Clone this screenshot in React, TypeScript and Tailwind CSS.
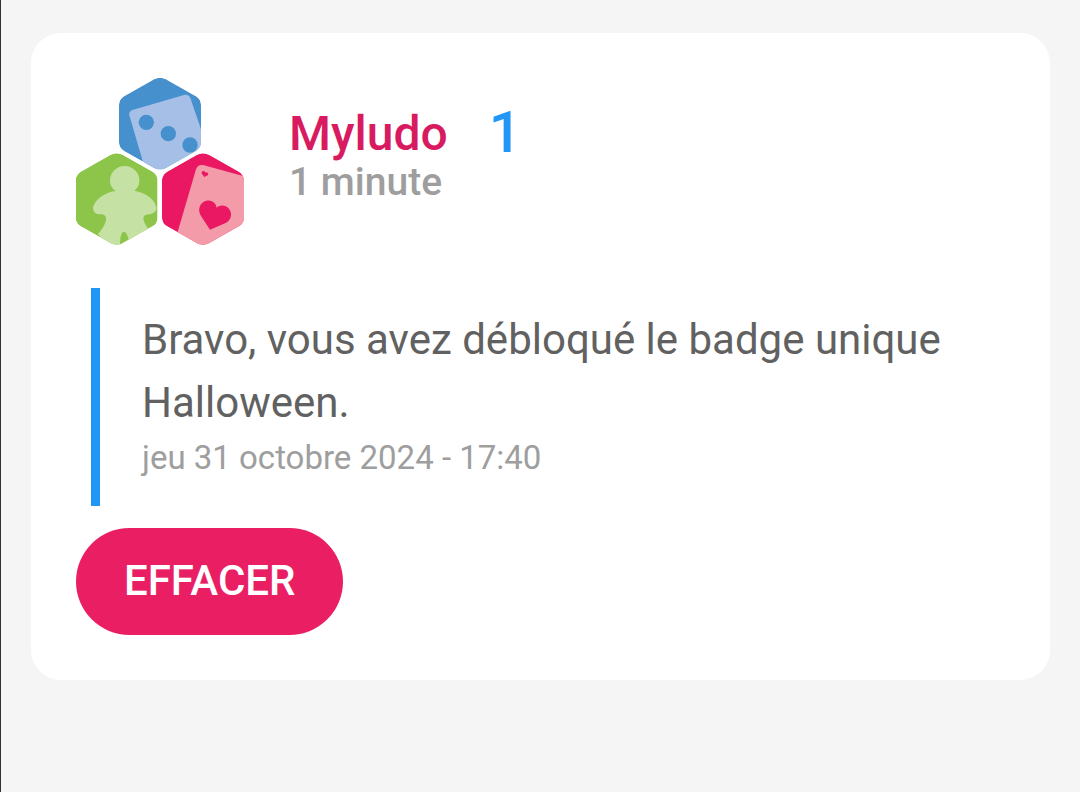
import React from 'react';

const HEXAGON =
  'M104 5Q122 -4 140 5L230 56Q245 65 245 82V194Q245 211 230 220L140 271Q122 280 104 271L14 220Q-1 211 -1 194V82Q-1 65 14 56Z';

const MyludoLogo: React.FC = () => (
  <svg viewBox="18 24 504 504" className="w-[168px] h-[168px] shrink-0" role="img" aria-label="Logo Myludo">
    <defs>
      <clipPath id="hexagon">
        <path d={HEXAGON} />
      </clipPath>
    </defs>

    {/* dice */}
    <g transform="translate(148 23)" clipPath="url(#hexagon)">
      <path d={HEXAGON} fill="#4690cd" />
      <path d="M30 113Q27 102 39 97L194 52Q207 49 213 61L262 205L190 290L76 270Z" fill="#a5bfe6" />
      <circle cx="81" cy="134" r="23" fill="#4690cd" />
      <circle cx="147" cy="168" r="23" fill="#4690cd" />
      <circle cx="212" cy="202" r="23" fill="#4690cd" />
    </g>

    {/* meeple */}
    <g transform="translate(18 249)" clipPath="url(#hexagon)">
      <path d={HEXAGON} fill="#8cc54a" />
      <path
        d="M119 114C108 106 102 95 102 83A44 44 0 0 1 190 83C190 95 185 105 175 113C209 119 236 138 241 163C242 175 232 182 218 184C204 186 200 191 203 202C206 214 213 222 220 233L160 280C160 260 153 236 144 236C135 236 132 254 132 280H98L66 243C77 232 88 214 90 201C92 190 86 183 72 184C57 184 49 174 52 160C60 138 85 119 119 114Z"
        fill="#c6e1a4"
      />
    </g>

    {/* playing card */}
    <g transform="translate(277 249)" clipPath="url(#hexagon)">
      <path d={HEXAGON} fill="#ea1762" />
      <path d="M45 240L101 49Q106 34 122 36L250 71V290H60Z" fill="#f39ba8" />
      <path d="M143 230L116 189C104 169 113 148 132 143C148 140 161 149 163 164C174 154 190 156 200 167C212 183 206 203 188 211Z" fill="#ea1762" />
      <path d="M126 72L119 63C115 56 122 51 128 56L131 59C136 56 140 62 136 67Z" fill="#ea1762" />
    </g>
  </svg>
);

interface NotificationCardProps {
  author: string;
  count: number;
  age: string;
  message: string;
  date: string;
}

const NotificationCard: React.FC<NotificationCardProps> = ({ author, count, age, message, date }) => (
  <article className="bg-white rounded-[30px] p-[45px]">
    <header className="flex items-center gap-[45px]">
      <MyludoLogo />
      <div className="pb-2 font-medium">
        <div className="flex items-start gap-[41px] h-12">
          <h2 className="text-[48px] leading-[48px] text-[#d81b60]">{author}</h2>
          <span className="text-[58px] leading-[44px] text-[#2196f3]">{count}</span>
        </div>
        <p className="text-[39px] leading-[48px] text-[#9e9e9e]">{age}</p>
      </div>
    </header>

    <blockquote className="mt-[42px] ml-[15px] border-l-[9px] border-[#2196f3] pl-[42px] pt-5 pb-6">
      <p className="text-[42px] leading-[63px] text-[#616161]">{message}</p>
      <time dateTime="2024-10-31T17:40" className="block text-[33px] leading-[48px] text-[#9e9e9e]">
        {date}
      </time>
    </blockquote>

    <button
      type="button"
      className="mt-[22px] block h-[107px] rounded-full bg-[#e91e63] px-12 pb-0.5 text-[42px] font-medium uppercase text-white"
    >
      Effacer
    </button>
  </article>
);

export default function App() {
  return (
    <main className="min-h-screen border-l border-[#333333] bg-[#f5f5f5] pl-[30px] pr-[30px] pt-[33px] pb-8 font-['Roboto',sans-serif]">
      <NotificationCard
        author="Myludo"
        count={1}
        age="1 minute"
        message="Bravo, vous avez débloqué le badge unique Halloween."
        date="jeu 31 octobre 2024 - 17:40"
      />
    </main>
  );
}
